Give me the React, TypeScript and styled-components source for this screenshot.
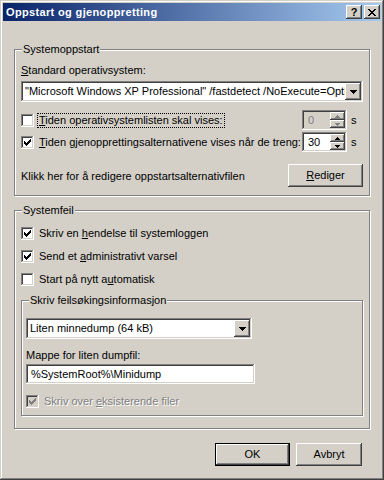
import styled, { createGlobalStyle } from "styled-components";

const face = "#d4d0c8";
const raised = `inset -1px -1px #404040, inset 1px 1px #ffffff, inset -2px -2px #808080, inset 2px 2px ${face}`;
const sunken = `inset -1px -1px #ffffff, inset 1px 1px #808080, inset -2px -2px ${face}, inset 2px 2px #404040`;

const GlobalStyle = createGlobalStyle`
  html, body {
    margin: 0;
    padding: 0;
    background: ${face};
  }
  body {
    font-family: Tahoma, "Liberation Sans", Arial, sans-serif;
    font-size: 11px;
    color: #000;
  }
`;

const Window = styled.div`
  width: 384px;
  height: 480px;
  box-sizing: border-box;
  padding: 3px;
  background: ${face};
  box-shadow: inset -1px -1px #404040, inset 1px 1px ${face}, inset -2px -2px #808080, inset 2px 2px #ffffff;
  display: flex;
  flex-direction: column;
`;

const TitleBar = styled.div`
  height: 18px;
  display: flex;
  align-items: center;
  padding: 0 1px 0 3px;
  background: linear-gradient(to right, #0a246a, #a6caf0);
`;

const TitleText = styled.span`
  flex: 1;
  color: #fff;
  font-weight: bold;
  font-size: 11px;
  letter-spacing: 0.35px;
  white-space: nowrap;
`;

const TitleButton = styled.div`
  width: 16px;
  height: 14px;
  box-sizing: border-box;
  background: ${face};
  box-shadow: ${raised};
  display: flex;
  align-items: center;
  justify-content: center;
  font-weight: bold;
  font-size: 11px;
  line-height: 14px;
  & + & {
    margin-left: 2px;
  }
`;

const Body = styled.div`
  flex: 1;
  display: flex;
  flex-direction: column;
  padding: 28px 11px 0;
`;

const Group = styled.div<{ $pad: string; $top?: number }>`
  position: relative;
  border: 1px solid #808080;
  box-shadow: inset 1px 1px #ffffff, 1px 1px #ffffff;
  padding: ${(p) => p.$pad};
  margin-top: ${(p) => p.$top ?? 0}px;
  display: flex;
  flex-direction: column;
`;

const Legend = styled.span`
  position: absolute;
  top: -7px;
  left: 7px;
  padding: 0 1px;
  line-height: 13px;
  background: ${face};
`;

const Label = styled.div<{ $top?: number }>`
  line-height: 13px;
  margin-top: ${(p) => p.$top ?? 0}px;
`;

const U = styled.span`
  text-decoration: underline;
`;

const Combo = styled.div<{ $w?: number; $top?: number }>`
  display: flex;
  height: 21px;
  width: ${(p) => (p.$w ? `${p.$w}px` : "auto")};
  margin-top: ${(p) => p.$top ?? 0}px;
  box-sizing: border-box;
  padding: 2px;
  background: #fff;
  box-shadow: ${sunken};
`;

const ComboText = styled.span`
  flex: 1;
  overflow: hidden;
  white-space: nowrap;
  padding-left: 2px;
  line-height: 17px;
`;

const DropButton = styled.span`
  flex: none;
  width: 16px;
  height: 17px;
  background: ${face};
  box-shadow: ${raised};
  display: flex;
  align-items: center;
  justify-content: center;
`;

const TextBox = styled.div<{ $w: number; $top?: number }>`
  height: 20px;
  width: ${(p) => p.$w}px;
  margin-top: ${(p) => p.$top ?? 0}px;
  box-sizing: border-box;
  padding: 2px 5px;
  line-height: 16px;
  background: #fff;
  box-shadow: ${sunken};
  white-space: nowrap;
`;

const CheckRow = styled.div<{ $disabled?: boolean; $top?: number }>`
  display: flex;
  align-items: center;
  gap: 4px;
  height: 17px;
  margin-top: ${(p) => p.$top ?? 0}px;
  min-width: 0;
  color: ${(p) => (p.$disabled ? "#808080" : "#000")};
  text-shadow: ${(p) => (p.$disabled ? "1px 1px #fff" : "none")};
`;

const Box = styled.span<{ $disabled?: boolean }>`
  flex: none;
  width: 13px;
  height: 13px;
  box-sizing: border-box;
  padding: 3px;
  background: ${(p) => (p.$disabled ? face : "#fff")};
  box-shadow: ${sunken};
  display: flex;
`;

const CheckText = styled.span<{ $focus?: boolean }>`
  padding: 0 1px;
  line-height: 13px;
  white-space: nowrap;
  overflow: hidden;
  outline: ${(p) => (p.$focus ? "1px dotted #000" : "none")};
`;

const SpinRow = styled.div<{ $top?: number }>`
  display: grid;
  grid-template-columns: 1fr 45px 16px;
  align-items: center;
  height: 20px;
  margin-top: ${(p) => p.$top ?? 0}px;
`;

const Spin = styled.div<{ $disabled?: boolean }>`
  display: flex;
  height: 20px;
  box-sizing: border-box;
  padding: 2px;
  background: ${(p) => (p.$disabled ? face : "#fff")};
  color: ${(p) => (p.$disabled ? "#808080" : "#000")};
  box-shadow: ${sunken};
`;

const SpinValue = styled.span`
  flex: 1;
  padding-left: 4px;
  line-height: 16px;
`;

const SpinButtons = styled.div`
  width: 15px;
  display: flex;
  flex-direction: column;
`;

const SpinButton = styled.span`
  flex: 1;
  background: ${face};
  box-shadow: ${raised};
  display: flex;
  align-items: center;
  justify-content: center;
`;

const Unit = styled.span`
  padding-left: 4px;
`;

const ActionRow = styled.div`
  display: flex;
  align-items: center;
  justify-content: space-between;
  margin-top: 12px;
`;

const Button = styled.div<{ $w: number; $default?: boolean }>`
  width: ${(p) => p.$w}px;
  height: 23px;
  box-sizing: border-box;
  background: ${face};
  border: ${(p) => (p.$default ? "1px solid #000" : "none")};
  box-shadow: ${raised};
  display: flex;
  align-items: center;
  justify-content: center;
  line-height: 13px;
`;

const Footer = styled.div`
  display: flex;
  justify-content: flex-end;
  gap: 6px;
  margin-top: 14px;
  padding-right: 8px;
`;

const CheckMark = ({ color }: { color: string }) => (
  <svg width="7" height="7" viewBox="0 0 7 7" shapeRendering="crispEdges">
    <path
      fill={color}
      d="M0 2h1v3h-1z M1 3h1v3h-1z M2 4h1v3h-1z M3 3h1v3h-1z M4 2h1v3h-1z M5 1h1v3h-1z M6 0h1v3h-1z"
    />
  </svg>
);

const DownArrow = () => (
  <svg width="7" height="4" viewBox="0 0 7 4" shapeRendering="crispEdges">
    <path fill="#000" d="M0 0h7v1h-7z M1 1h5v1h-5z M2 2h3v1h-3z M3 3h1v1h-1z" />
  </svg>
);

const SmallArrow = ({ up, color }: { up?: boolean; color: string }) => (
  <svg width="5" height="3" viewBox="0 0 5 3" shapeRendering="crispEdges">
    <path
      fill={color}
      d={up ? "M2 0h1v1h-1z M1 1h3v1h-3z M0 2h5v1h-5z" : "M0 0h5v1h-5z M1 1h3v1h-3z M2 2h1v1h-1z"}
    />
  </svg>
);

const CloseIcon = () => (
  <svg width="8" height="7" viewBox="0 0 8 7" shapeRendering="crispEdges">
    <path
      fill="#000"
      d="M0 0h2v1h-2z M6 0h2v1h-2z M1 1h2v1h-2z M5 1h2v1h-2z M2 2h4v1h-4z M3 3h2v1h-2z M2 4h4v1h-4z M1 5h2v1h-2z M5 5h2v1h-2z M0 6h2v1h-2z M6 6h2v1h-2z"
    />
  </svg>
);

function Check({ checked, disabled }: { checked?: boolean; disabled?: boolean }) {
  return (
    <Box $disabled={disabled}>{checked && <CheckMark color={disabled ? "#808080" : "#000"} />}</Box>
  );
}

function Spinner({ value, disabled }: { value: string; disabled?: boolean }) {
  const c = disabled ? "#808080" : "#000";
  return (
    <Spin $disabled={disabled}>
      <SpinValue>{value}</SpinValue>
      <SpinButtons>
        <SpinButton>
          <SmallArrow up color={c} />
        </SpinButton>
        <SpinButton>
          <SmallArrow color={c} />
        </SpinButton>
      </SpinButtons>
    </Spin>
  );
}

export default function App() {
  return (
    <>
      <GlobalStyle />
      <Window>
        <TitleBar>
          <TitleText>Oppstart og gjenoppretting</TitleText>
          <TitleButton>?</TitleButton>
          <TitleButton>
            <CloseIcon />
          </TitleButton>
        </TitleBar>
        <Body>
          <Group $pad="14px 6px 8px">
            <Legend>Systemoppstart</Legend>
            <Label>
              <U>S</U>tandard operativsystem:
            </Label>
            <Combo $top={4}>
              <ComboText>"Microsoft Windows XP Professional" /fastdetect /NoExecute=OptI</ComboText>
              <DropButton>
                <DownArrow />
              </DropButton>
            </Combo>
            <SpinRow $top={8}>
              <CheckRow>
                <Check />
                <CheckText $focus>
                  <U>T</U>iden operativsystemlisten skal vises:
                </CheckText>
              </CheckRow>
              <Spinner value="0" disabled />
              <Unit>s</Unit>
            </SpinRow>
            <SpinRow $top={2}>
              <CheckRow>
                <Check checked />
                <CheckText>
                  <U>T</U>iden gjenopprettingsalternativene vises når de treng:
                </CheckText>
              </CheckRow>
              <Spinner value="30" />
              <Unit>s</Unit>
            </SpinRow>
            <ActionRow>
              <span>Klikk her for å redigere oppstartsalternativfilen</span>
              <Button $w={75}>
                <span>
                  <U>R</U>ediger
                </span>
              </Button>
            </ActionRow>
          </Group>

          <Group $pad="14px 6px 12px" $top={14}>
            <Legend>Systemfeil</Legend>
            <CheckRow>
              <Check checked />
              <CheckText>
                Skriv en <U>h</U>endelse til systemloggen
              </CheckText>
            </CheckRow>
            <CheckRow $top={6}>
              <Check checked />
              <CheckText>
                Send et <U>a</U>dministrativt varsel
              </CheckText>
            </CheckRow>
            <CheckRow $top={6}>
              <Check />
              <CheckText>
                Start på nytt a<U>u</U>tomatisk
              </CheckText>
            </CheckRow>

            <Group $pad="17px 4px 5px" $top={12}>
              <Legend>Skriv feilsøkingsinformasjon</Legend>
              <Combo $w={226}>
                <ComboText>Liten minnedump (64 kB)</ComboText>
                <DropButton>
                  <DownArrow />
                </DropButton>
              </Combo>
              <Label $top={10}>Mappe for liten dumpfil:</Label>
              <TextBox $w={229} $top={2}>
                %SystemRoot%\Minidump
              </TextBox>
              <CheckRow $disabled $top={9}>
                <Check checked disabled />
                <CheckText>
                  Skriv over <U>e</U>ksisterende filer
                </CheckText>
              </CheckRow>
            </Group>
          </Group>

          <Footer>
            <Button $w={75} $default>
              OK
            </Button>
            <Button $w={66}>Avbryt</Button>
          </Footer>
        </Body>
      </Window>
    </>
  );
}
